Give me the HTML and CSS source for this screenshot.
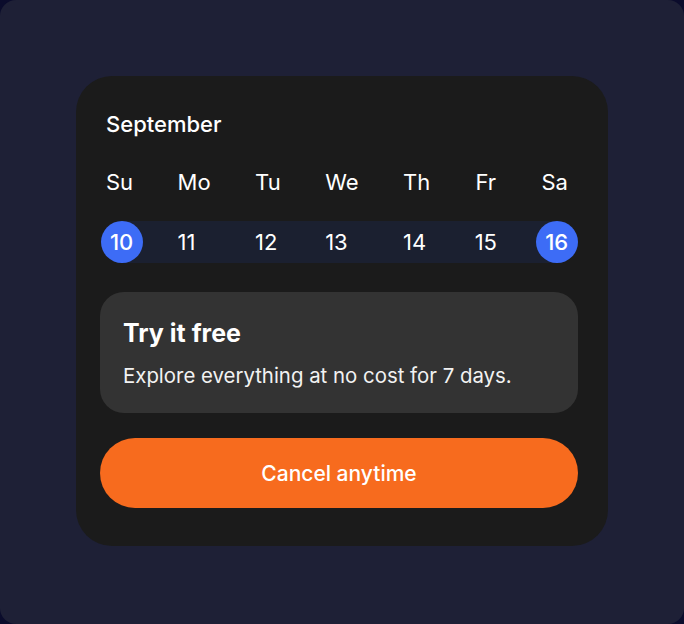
FILE: index.html
```html
<!DOCTYPE html>
<html lang="en">
<head>
<meta charset="utf-8">
<title>Try it free</title>
<link rel="stylesheet" href="styles.css">
</head>
<body>
<div class="frame">
  <section class="card">
    <h2 class="month">September</h2>
    <div class="week">
      <span class="dow">Su</span>
      <span class="dow">Mo</span>
      <span class="dow">Tu</span>
      <span class="dow">We</span>
      <span class="dow">Th</span>
      <span class="dow">Fr</span>
      <span class="dow">Sa</span>
      <span class="band"></span>
      <span class="date sel">10</span>
      <span class="date">11</span>
      <span class="date">12</span>
      <span class="date">13</span>
      <span class="date">14</span>
      <span class="date">15</span>
      <span class="date sel">16</span>
    </div>
    <div class="promo">
      <h3 class="promo-title">Try it free</h3>
      <p class="promo-text">Explore everything at no cost for 7 days.</p>
    </div>
    <button class="cta">Cancel anytime</button>
  </section>
</div>
</body>
</html>
```

FILE: styles.css
```css
html {
  background: #0b0c2c;
}
body {
  margin: 0;
  font-family: Inter, "Noto Sans", "Liberation Sans", sans-serif;
  color: #ffffff;
}
.frame {
  width: 684px;
  height: 624px;
  box-sizing: border-box;
  padding: 76px;
  background: #1e2036;
  border-radius: 16px;
}
.card {
  background: #1b1b1b;
  border-radius: 36px;
  padding: 34px 30px 38px 24px;
}
.month {
  margin: 0 0 0 6px;
  font-size: 22px;
  font-weight: 500;
  line-height: 28px;
}
.week {
  margin-top: 30px;
  display: grid;
  grid-template-columns: repeat(7, auto);
  grid-template-rows: 28px 42px;
  row-gap: 25px;
  justify-content: space-between;
  padding: 0 10px 0 6px;
  font-size: 22px;
  line-height: 28px;
}
.dow {
  grid-row: 1;
  justify-self: center;
}
.band {
  grid-row: 2;
  grid-column: 1 / -1;
  background: #1b2030;
  margin: 0 11px 0 15px;
}
.date {
  grid-row: 2;
  align-self: center;
  justify-self: start;
  line-height: 42px;
}
.date.sel {
  justify-self: center;
  width: 42px;
  height: 42px;
  margin: 0 -10px 0 -6px;
  border-radius: 50%;
  background: #3d6cf6;
  text-align: center;
  font-weight: 500;
}
.week .date:nth-of-type(9) { grid-column: 1; }
.week .date:nth-of-type(10) { grid-column: 2; }
.week .date:nth-of-type(11) { grid-column: 3; }
.week .date:nth-of-type(12) { grid-column: 4; }
.week .date:nth-of-type(13) { grid-column: 5; }
.week .date:nth-of-type(14) { grid-column: 6; }
.week .date:nth-of-type(15) { grid-column: 7; }
.promo {
  margin-top: 29px;
  background: #333333;
  border-radius: 24px;
  padding: 26px 23px 24px;
}
.promo-title {
  margin: 0;
  font-size: 25px;
  font-weight: 700;
  line-height: 30px;
}
.promo-text {
  margin: 15px 0 0;
  font-size: 20.4px;
  font-weight: 400;
  line-height: 26px;
  color: #f2f2f2;
}
.cta {
  display: block;
  width: 100%;
  margin-top: 25px;
  height: 70px;
  border: 0;
  border-radius: 35px;
  background: #f76b1e;
  color: #ffffff;
  font-family: inherit;
  font-size: 21px;
  font-weight: 500;
}
```
